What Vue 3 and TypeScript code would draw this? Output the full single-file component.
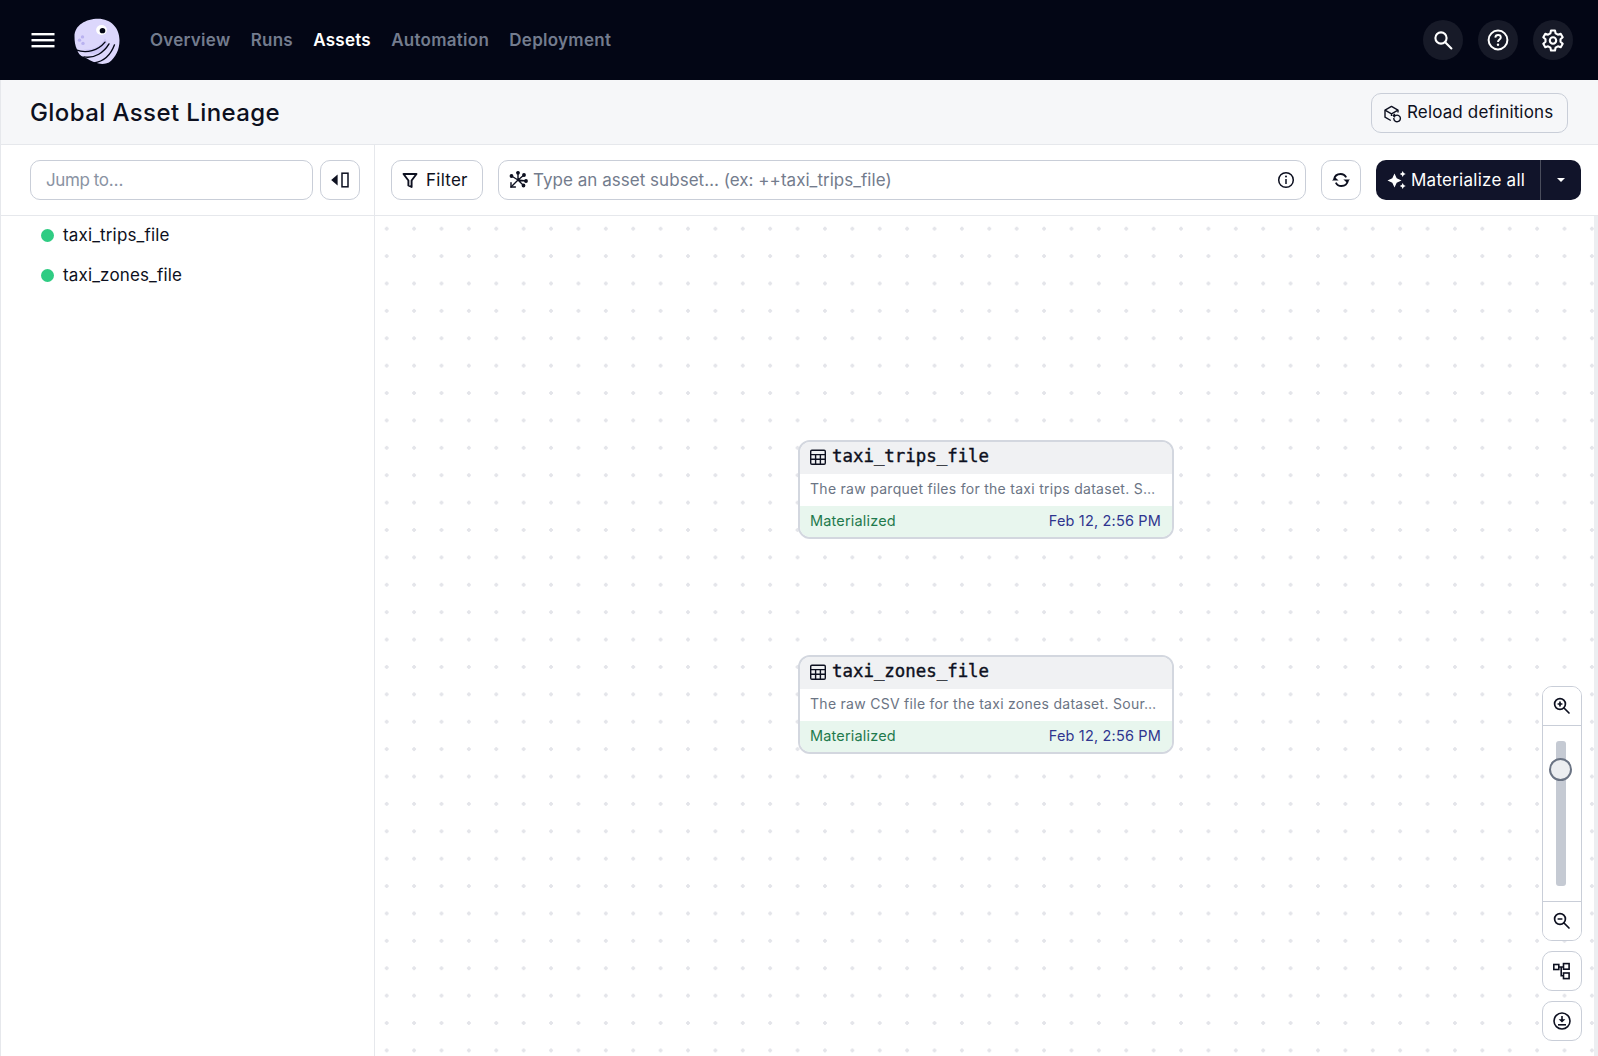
<template>
  <div class="app">
    <nav class="topnav">
      <div class="nav-left">
        <button class="menu-btn" aria-label="Menu">
          <svg width="24" height="24" viewBox="0 0 24 24" fill="#fff"><rect x="0.5" y="5" width="23" height="2.4" /><rect x="0.5" y="11" width="23" height="2.4" /><rect x="0.5" y="17" width="23" height="2.4" /></svg>
        </button>
        <svg class="logo" width="54" height="54" viewBox="0 0 54 54">
          <g transform="translate(0 2) scale(1 .93)">
            <path d="M4.5 22C4.5 10 16 3 28 3C41 3 49.5 13 49.5 26C49.5 36 46 44 39 50C35 52 30 52 25 50C22 49 18 46 14 44C10 43 8 40 7 36C5 32 4.5 27 4.5 22Z" fill="#dcd7fc" />
            <path d="M14 36C23 37 31 32 35 24C40 30 35 37 28 40C22 42 18 40 14 36Z" fill="#cfc9f8" />
            <g fill="none" stroke="#030615" stroke-width="1.35" stroke-linecap="round">
              <path d="M6 36.5C17 41 28 37 35 28" />
              <path d="M14 44C25 46 34 39 39 30" />
              <path d="M24 50.5C34 49 41 41 44.5 31" />
            </g>
            <circle cx="31.5" cy="15" r="5.4" fill="#fff" /><circle cx="32.5" cy="15.8" r="2.8" fill="#030615" />
            <circle cx="12.5" cy="22.5" r="1.7" fill="#b9b2f0" /><circle cx="9.5" cy="26" r="1.7" fill="#b9b2f0" /><circle cx="13" cy="29.5" r="1.7" fill="#b9b2f0" />
          </g>
        </svg>
        <a v-for="link in navLinks" :key="link" class="nav-link" :class="{ active: link === 'Assets' }">{{ link }}</a>
      </div>
      <div class="nav-right">
        <button class="round-btn" aria-label="Search">
          <svg width="24" height="24" viewBox="0 0 24 24" fill="none" stroke="#fff" stroke-width="2.1"><circle cx="10" cy="10" r="5.6" /><path d="M14.2 14.2L20.4 20.4" stroke-linecap="round" /></svg>
        </button>
        <button class="round-btn" aria-label="Help">
          <svg width="24" height="24" viewBox="0 0 24 24" fill="none" stroke="#fff" stroke-width="2"><circle cx="12" cy="12" r="9.4" /><path d="M9.3 9.6C9.4 8 10.6 7 12.1 7C13.7 7 14.8 8 14.8 9.4C14.8 11.5 12 11.5 12 14" stroke-width="1.9" /><circle cx="12" cy="16.8" r="1.2" fill="#fff" stroke="none" /></svg>
        </button>
        <button class="round-btn" aria-label="Settings">
          <svg width="24" height="24" viewBox="0 0 24 24" fill="none" stroke="#fff" stroke-width="2.1" stroke-linejoin="round"><path d="M10 2.5H14L14.6 5.4L16.9 6.7L19.7 5.8L21.7 9.2L19.5 11.2V13.8L21.7 15.8L19.7 19.2L16.9 18.3L14.6 19.6L14 22.5H10L9.4 19.6L7.1 18.3L4.3 19.2L2.3 15.8L4.5 13.8V11.2L2.3 9.2L4.3 5.8L7.1 6.7L9.4 5.4Z" /><circle cx="12" cy="12.5" r="3.2" /></svg>
        </button>
      </div>
    </nav>

    <header class="page-header">
      <h1>Global Asset Lineage</h1>
      <button class="btn reload-btn">
        <svg width="20" height="20" viewBox="0 0 20 20" fill="none" stroke="#0d1020" stroke-width="1.4" stroke-linejoin="round"><path d="M8.8 17.5L3 14.2V7.2L9.5 3.4L16 7.2V9.4" /><path d="M3 7.2L9.5 10.8L16 7.2M9.5 10.8V13" /><path d="M11.8 15.4A3.3 3.3 0 1 0 13.4 12.6H11.4" stroke-linecap="round" /><path d="M13 10.9L11.3 12.6L13 14.3" /></svg>
        Reload definitions
      </button>
    </header>

    <div class="main">
      <aside class="sidebar">
        <div class="side-tools">
          <input class="jump-input" placeholder="Jump to…" />
          <button class="btn icon-btn" aria-label="Collapse">
            <svg width="20" height="20" viewBox="0 0 20 20"><path d="M7.6 4.6V15.4L1.2 10Z" fill="#0d1020" /><rect x="12" y="3.2" width="6" height="13.6" fill="none" stroke="#0d1020" stroke-width="1.5" /></svg>
          </button>
        </div>
        <ul class="asset-list">
          <li v-for="asset in assets" :key="asset.name"><span class="dot"></span>{{ asset.name }}</li>
        </ul>
      </aside>

      <section class="graph">
        <div class="graph-tools">
          <button class="btn filter-btn">
            <svg width="20" height="20" viewBox="0 0 20 20" fill="none" stroke="#0d1020" stroke-width="1.9" stroke-linejoin="round"><path d="M3.5 4H16.5L11.6 10.5V17L8.4 15.5V10.5Z" /></svg>
            Filter
          </button>
          <div class="search-box">
            <svg width="20" height="20" viewBox="0 0 20 20" fill="none" stroke="#0d1020" stroke-width="1.4" stroke-linecap="round"><path d="M10 10L10 2.8M10 10L16 5M10 10L18 11M10 10L15.5 15.5M10 10L3 17M10 10L3.5 6" /><path d="M3 12.6V17H7.4" /><circle cx="10" cy="2.8" r="1.2" fill="#0d1020" /><circle cx="16" cy="5" r="1.2" fill="#0d1020" /><circle cx="18" cy="11" r="1.2" fill="#0d1020" /><circle cx="15.5" cy="15.5" r="1.2" fill="#0d1020" /><circle cx="3.5" cy="6" r="1.2" fill="#0d1020" /></svg>
            <input placeholder="Type an asset subset… (ex: ++taxi_trips_file)" />
            <svg width="20" height="20" viewBox="0 0 20 20" fill="none" stroke="#0d1020" stroke-width="1.5"><circle cx="10" cy="10" r="7.3" /><path d="M10 9V14" /><circle cx="10" cy="6.4" r="1" fill="#0d1020" stroke="none" /></svg>
          </div>
          <button class="btn icon-btn" aria-label="Refresh">
            <svg width="20" height="20" viewBox="0 0 20 20" fill="none" stroke="#0d1020" stroke-width="1.8"><path d="M3 9.6C3.6 6.2 6.4 4 9.6 4C12 4 14 5 15.2 7.4" /><path d="M17 10.4C16.4 13.8 13.6 16 10.4 16C8 16 6 15 4.8 12.6" /><path d="M12.4 9.4H19L15.7 6.2Z" fill="#0d1020" stroke="none" transform="rotate(180 15.7 9.4)" /><path d="M1 10.6H7.6L4.3 13.8Z" fill="#0d1020" stroke="none" transform="rotate(180 4.3 10.6)" /></svg>
          </button>
          <div class="materialize">
            <button class="mat-main">
              <svg width="20" height="20" viewBox="0 0 20 20" fill="#fff"><path d="M7.5 3.5L9.7 8.3L14.5 10.5L9.7 12.7L7.5 17.5L5.3 12.7L.5 10.5L5.3 8.3Z" /><path d="M15.7 1L16.7 3L18.7 4L16.7 5L15.7 7L14.7 5L12.7 4L14.7 3Z" /><path d="M15.7 13L16.7 15L18.7 16L16.7 17L15.7 19L14.7 17L12.7 16L14.7 15Z" /></svg>
              Materialize all
            </button>
            <button class="mat-caret" aria-label="More">
              <svg width="12" height="8" viewBox="0 0 12 8"><path d="M2 2H10L6 6Z" fill="#fff" /></svg>
            </button>
          </div>
        </div>

        <div class="canvas">
          <div v-for="node in nodes" :key="node.name" class="node" :style="{ top: node.top + 'px' }">
            <div class="node-head">
              <svg width="18" height="18" viewBox="0 0 18 18" fill="none" stroke="#0d1020" stroke-width="1.4"><rect x="1.7" y="2.2" width="14.6" height="14" rx="1.2" /><path d="M1.7 6.6H16.3M1.7 11.3H16.3M6.6 6.6V16.2M11.4 6.6V16.2" /></svg>
              <span>{{ node.name }}</span>
            </div>
            <div class="node-desc">{{ node.desc }}</div>
            <div class="node-status"><span class="mat">Materialized</span><span class="when">Feb 12, 2:56 PM</span></div>
          </div>

          <div class="zoom-tools">
            <div class="zoom-group">
              <button class="zoom-cell" aria-label="Zoom in">
                <svg width="20" height="20" viewBox="0 0 20 20" fill="none" stroke="#0d1020" stroke-width="1.7"><circle cx="8" cy="8" r="5.4" /><path d="M12 12L17 17" stroke-linecap="round" /><path d="M5.6 8H10.4M8 5.6V10.4" /></svg>
              </button>
              <div class="slider"><div class="track"></div><div class="thumb"></div></div>
              <button class="zoom-cell" aria-label="Zoom out">
                <svg width="20" height="20" viewBox="0 0 20 20" fill="none" stroke="#0d1020" stroke-width="1.7"><circle cx="8" cy="8" r="5.4" /><path d="M12 12L17 17" stroke-linecap="round" /><path d="M5.6 8H10.4" /></svg>
              </button>
            </div>
            <button class="zoom-single" aria-label="Layout">
              <svg width="20" height="20" viewBox="0 0 20 20" fill="none" stroke="#0d1020" stroke-width="1.6"><rect x="1.8" y="3.5" width="5" height="5" /><rect x="11.5" y="2.6" width="5.6" height="5.6" /><rect x="11.5" y="12" width="5.6" height="5.6" /><path d="M6.8 6H11.5M9.2 6V14.8H11.5" /></svg>
            </button>
            <button class="zoom-single" aria-label="Download">
              <svg width="20" height="20" viewBox="0 0 20 20" fill="none" stroke="#0d1020" stroke-width="1.6"><circle cx="10" cy="10" r="8" /><path d="M10 5V9.5" /><path d="M6.6 8.2H13.4L10 11.6Z" fill="#0d1020" stroke="none" /><path d="M6 13.8H14" /></svg>
            </button>
          </div>
        </div>
      </section>
    </div>
  </div>
</template>

<script setup lang="ts">
const navLinks = ['Overview', 'Runs', 'Assets', 'Automation', 'Deployment']

const assets = [{ name: 'taxi_trips_file' }, { name: 'taxi_zones_file' }]

const nodes = [
  { name: 'taxi_trips_file', desc: 'The raw parquet files for the taxi trips dataset. S…', top: 224 },
  { name: 'taxi_zones_file', desc: 'The raw CSV file for the taxi zones dataset. Sour…', top: 439 }
]
</script>

<style>
html,
body {
  margin: 0;
  background: #fff;
}
</style>

<style scoped>
* {
  box-sizing: border-box;
}

.app {
  width: 1598px;
  height: 1056px;
  overflow: hidden;
  display: flex;
  flex-direction: column;
  font-family: Inter, "Noto Sans", sans-serif;
  color: #0d1020;
}

button {
  font-family: inherit;
  cursor: pointer;
}

.topnav {
  height: 80px;
  flex: none;
  background: #030615;
  display: flex;
  align-items: center;
  justify-content: space-between;
  padding: 0 25px 0 31px;
}

.nav-left {
  display: flex;
  align-items: center;
}

.menu-btn {
  width: 24px;
  height: 24px;
  padding: 0;
  border: 0;
  background: none;
  margin-right: 15px;
}

.logo {
  margin-top: 2px;
  margin-right: 26px;
}

.nav-link {
  font-size: 17px;
  font-weight: 600;
  letter-spacing: 0.27px;
  color: #737c8e;
  margin-right: 20.2px;
}

.nav-link.active {
  color: #fff;
}

.nav-right {
  display: flex;
  gap: 15px;
}

.round-btn {
  width: 40px;
  height: 40px;
  border-radius: 50%;
  border: 0;
  padding: 0;
  background: #171a28;
  display: flex;
  align-items: center;
  justify-content: center;
}

.page-header {
  height: 65px;
  flex: none;
  background: #f6f7f9;
  border-bottom: 1px solid #e6e8ec;
  border-left: 1px solid #e6e8ec;
  display: flex;
  align-items: center;
  justify-content: space-between;
  padding: 0 30px 0 29px;
}

h1 {
  margin: 0;
  font-size: 24px;
  font-weight: 500;
  letter-spacing: 0.4px;
  color: #0d1020;
}

.btn {
  height: 40px;
  border: 1px solid #c9ced8;
  border-radius: 10px;
  background: #fff;
  color: #0d1020;
  font-size: 17px;
  letter-spacing: 0.25px;
  display: flex;
  align-items: center;
  justify-content: flex-start;
  flex: none;
}

.reload-btn {
  width: 197px;
  margin-top: 2px;
  padding: 0 0 2px 10px;
  gap: 5px;
  letter-spacing: 0.15px;
  background: #f6f7f9;
}

.reload-btn svg {
  margin-top: 2px;
}

.icon-btn {
  width: 40px;
  padding: 0;
  justify-content: center;
}

.main {
  flex: 1;
  display: flex;
  min-height: 0;
}

.sidebar {
  width: 375px;
  flex: none;
  border-left: 1px solid #e6e8ec;
  border-right: 1px solid #e6e8ec;
  background: #fff;
}

.side-tools {
  height: 71px;
  border-bottom: 1px solid #e6e8ec;
  display: flex;
  align-items: center;
  gap: 7px;
  padding: 0 14px 0 29px;
}

.jump-input {
  width: 283px;
  height: 40px;
  border: 1px solid #c9ced8;
  border-radius: 10px;
  padding: 0 15px;
  font: 17px Inter, "Noto Sans", sans-serif;
  letter-spacing: -0.4px;
  outline: none;
}

.jump-input::placeholder {
  color: #8a93a3;
  opacity: 1;
}

.search-box input::placeholder {
  color: #737c8d;
  opacity: 1;
}

.asset-list {
  list-style: none;
  margin: -1px 0 0;
  padding: 0;
}

.asset-list li {
  height: 40px;
  display: flex;
  align-items: center;
  padding-left: 40px;
  font-size: 17px;
  letter-spacing: 0.15px;
  color: #0d1020;
}

.dot {
  width: 13px;
  height: 13px;
  border-radius: 50%;
  background: #2fcc83;
  margin-right: 9px;
}

.graph {
  flex: 1;
  min-width: 0;
  display: flex;
  flex-direction: column;
}

.graph-tools {
  height: 71px;
  flex: none;
  border-bottom: 1px solid #e6e8ec;
  display: flex;
  align-items: center;
  gap: 15px;
  padding: 0 17px 0 16px;
}

.filter-btn {
  width: 92px;
  padding: 0 0 0 8px;
  gap: 6px;
}

.search-box {
  flex: 1;
  height: 40px;
  min-width: 0;
  border: 1px solid #c9ced8;
  border-radius: 10px;
  display: flex;
  align-items: center;
  padding: 0 9px;
  gap: 5px;
}

.search-box input {
  flex: 1;
  min-width: 0;
  border: 0;
  outline: none;
  font: 17px Inter, "Noto Sans", sans-serif;
  letter-spacing: 0.03px;
  padding: 0;
}

.materialize {
  width: 205px;
  height: 40px;
  flex: none;
  display: flex;
  background: #11142a;
  border-radius: 10px;
  overflow: hidden;
}

.mat-main {
  flex: 1;
  border: 0;
  background: none;
  color: #fff;
  font-size: 17px;
  letter-spacing: 0.25px;
  display: flex;
  align-items: center;
  gap: 4px;
  padding: 0 0 0 11px;
}

.mat-caret {
  width: 41px;
  flex: none;
  border: 0;
  border-left: 1px solid #4a4d5c;
  background: none;
  padding: 0;
  display: flex;
  align-items: center;
  justify-content: center;
}

.canvas {
  flex: 1;
  position: relative;
  border-right: 4px solid #eceef1;
  background-image: radial-gradient(circle, #e4e5ea 1.6px, transparent 1.8px);
  background-size: 27.4px 27.4px;
  background-position: -2px -1px;
}

.node {
  position: absolute;
  left: 423px;
  width: 376px;
  height: 99px;
  border: 2px solid #d3d7df;
  border-radius: 12px;
  overflow: hidden;
  background: #fff;
}

.node-head {
  height: 32px;
  background: #f0f1f3;
  display: flex;
  align-items: center;
  gap: 5px;
  padding: 0 0 4px 9px;
  font-family: "DejaVu Sans Mono", monospace;
  font-size: 17.4px;
  font-weight: 400;
  -webkit-text-stroke: 0.4px #0d1020;
}

.node-head svg {
  margin-top: 1px;
}

.node-desc {
  height: 32px;
  line-height: 29px;
  padding: 0 10px;
  font-size: 14px;
  letter-spacing: 0.28px;
  color: #6b7484;
  white-space: nowrap;
}

.node-status {
  height: 31px;
  background: #e8f6ee;
  display: flex;
  align-items: center;
  justify-content: space-between;
  padding: 0 11px 3px 10px;
  font-size: 14.5px;
  letter-spacing: 0.17px;
}

.mat {
  color: #1f7a4d;
}

.when {
  color: #2f358f;
}

.zoom-tools {
  position: absolute;
  right: 12px;
  top: 470px;
  width: 40px;
  display: flex;
  flex-direction: column;
  gap: 10px;
}

.zoom-group {
  border: 1px solid #c9ced8;
  border-radius: 10px;
  background: #fff;
  overflow: hidden;
}

.zoom-cell {
  width: 100%;
  height: 38px;
  border: 0;
  padding: 0;
  background: #fff;
  display: flex;
  align-items: center;
  justify-content: center;
}

.slider {
  height: 177px;
  position: relative;
  border-top: 1px solid #c9ced8;
  border-bottom: 1px solid #c9ced8;
}

.track {
  position: absolute;
  left: 13px;
  top: 15px;
  width: 10px;
  height: 145px;
  background: #c5cad3;
  border-radius: 3px;
}

.thumb {
  position: absolute;
  left: 6px;
  top: 32px;
  width: 23px;
  height: 23px;
  border-radius: 50%;
  background: #eceef1;
  border: 2px solid #6b7484;
}

.zoom-single {
  width: 40px;
  height: 40px;
  border: 1px solid #c9ced8;
  border-radius: 10px;
  background: #fff;
  padding: 0;
  display: flex;
  align-items: center;
  justify-content: center;
}
</style>
